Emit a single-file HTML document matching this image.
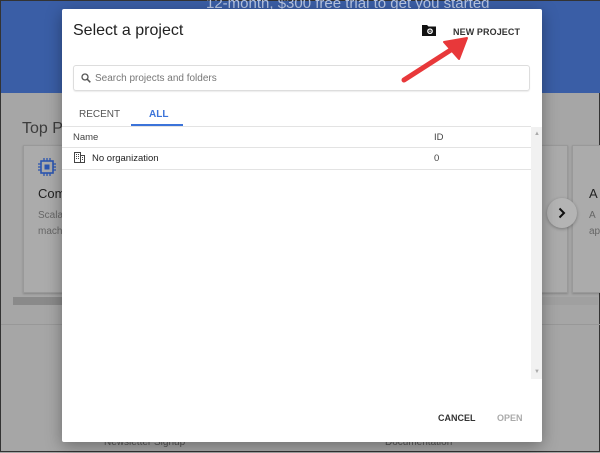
<!DOCTYPE html>
<html><head><meta charset="utf-8"><style>
*{margin:0;padding:0;box-sizing:border-box}
body{width:600px;height:452px;overflow:hidden;position:relative;font-family:"Liberation Sans",Arial,sans-serif;background:#a6a6a6;border:1px solid #333}
.blue{position:absolute;left:0;top:0;width:600px;height:92px;background:#3a5ea6}
.blue .t{position:absolute;left:205px;top:-6px;color:#b9c7e3;font-size:15px}
.top{position:absolute;left:21px;top:119px;font-size:16px;color:#3c3c3c}
.card{position:absolute;top:144px;height:148px;background:#ababab;border:1px solid #999;box-shadow:0 1px 2px rgba(0,0,0,.2)}
.sb{position:absolute;left:12px;top:296px;width:585px;height:8px;background:#a0a0a0}
.sb i{position:absolute;left:0;top:0;width:60px;height:8px;background:#8a8a8a}
.low{position:absolute;left:0;top:323px;width:600px;height:1px;background:#989898}
.circ{position:absolute;left:546px;top:197px;width:30px;height:30px;border-radius:50%;background:#b4b4b4;box-shadow:0 1px 3px rgba(0,0,0,.3)}
.dlg{position:absolute;left:61px;top:8px;width:480px;height:433px;background:#fff;box-shadow:0 4px 16px rgba(0,0,0,.35);border-radius:2px}
.h{position:absolute;left:11px;top:13px;font-size:16px;color:#222}
.np{position:absolute;left:391px;top:18px;font-size:9px;font-weight:bold;color:#333;letter-spacing:.1px}
.fold{position:absolute;left:360px;top:15px}
.search{position:absolute;left:11px;top:56px;width:457px;height:26px;border:1px solid #ddd;border-radius:3px;box-shadow:0 1px 1px rgba(0,0,0,.08)}
.search span{position:absolute;left:21px;top:7px;font-size:10px;color:#777}
.search svg{position:absolute;left:7px;top:7px}
.tab{position:absolute;top:100px;font-size:10px;color:#555}
.ul{position:absolute;left:69px;top:115px;width:52px;height:2px;background:#3b73d9}
.line{position:absolute;left:0;width:469px;height:1px;background:#e3e3e3}
.cell{position:absolute;font-size:9.5px;color:#444}
.vsb{position:absolute;left:469px;top:118px;width:11px;height:252px;background:#f1f1f1}
.btn{position:absolute;top:404px;font-size:9px;font-weight:bold}
.arrow{position:absolute;left:0;top:0}
</style></head><body>
<div class="blue"><div class="t">12-month, $300 free trial to get you started</div></div>
<div class="top">Top Pro</div>
<div class="card" style="left:22px;width:150px">
 <svg style="position:absolute;left:14px;top:12px" width="18" height="18" viewBox="0 0 18 18"><rect x="3" y="3" width="12" height="12" fill="none" stroke="#2b55b0" stroke-width="1.6"/><rect x="6.5" y="6.5" width="5" height="5" fill="#2b55b0"/><g stroke="#2b55b0" stroke-width="1.3"><path d="M6 0v3M9 0v3M12 0v3M6 15v3M9 15v3M12 15v3M0 6h3M0 9h3M0 12h3M15 6h3M15 9h3M15 12h3"/></g></svg>
 <div style="position:absolute;left:14px;top:40px;font-size:13px;color:#222">Comp</div>
 <div style="position:absolute;left:14px;top:62px;font-size:10px;color:#666;line-height:16px">Scalal<br>machi</div>
</div>
<div class="card" style="left:571px;width:30px">
 <div style="position:absolute;left:16px;top:40px;font-size:13px;color:#222">A</div>
 <div style="position:absolute;left:16px;top:62px;font-size:10px;color:#666;line-height:16px">A<br>ap</div>
</div>
<div class="card" style="left:539px;width:28px"></div>
<div class="sb"><i></i></div>
<div class="low"></div>
<div class="circ"><svg style="position:absolute;left:11px;top:9px" width="8" height="12" viewBox="0 0 8 12"><path d="M1.5 1.5L6 6l-4.5 4.5" fill="none" stroke="#111" stroke-width="2"/></svg></div>
<div style="position:absolute;left:103px;top:436px;font-size:10px;color:#555">Newsletter Signup</div>
<div style="position:absolute;left:384px;top:436px;font-size:10px;color:#555">Documentation</div>

<div class="dlg">
 <div class="h">Select a project</div>
 <svg class="fold" width="14" height="12" viewBox="0 0 14 12"><path d="M0 1h5l1.5 1.5H14V12H0z" fill="#111"/><circle cx="8" cy="7.2" r="2.2" fill="none" stroke="#fff" stroke-width="1.3"/><circle cx="8" cy="7.2" r=".7" fill="#fff"/></svg>
 <div class="np">NEW PROJECT</div>
 <div class="search"><svg width="10" height="10" viewBox="0 0 10 10"><circle cx="4" cy="4" r="3" fill="none" stroke="#555" stroke-width="1.3"/><path d="M6.2 6.2L9.3 9.3" stroke="#555" stroke-width="1.5"/></svg><span>Search projects and folders</span></div>
 <div class="tab" style="left:17px">RECENT</div>
 <div class="tab" style="left:87px;color:#3b73d9;font-weight:bold">ALL</div>
 <div class="ul"></div>
 <div class="line" style="top:117px"></div>
 <div class="cell" style="left:11px;top:123px">Name</div>
 <div class="cell" style="left:372px;top:123px">ID</div>
 <div class="line" style="top:138px"></div>
 <svg style="position:absolute;left:12px;top:143px" width="11" height="11" viewBox="0 0 11 11"><path d="M0.5 0.5h6v10h-6zM6.5 3.5h4v7h-4z" fill="none" stroke="#444"/><path d="M2 2h1v1H2zM4 2h1v1H4zM2 4h1v1H2zM4 4h1v1H4zM2 6h1v1H2zM4 6h1v1H4zM8 5h1v1H8zM8 7h1v1H8z" fill="#444"/></svg>
 <div class="cell" style="left:30px;top:144px;color:#222">No organization</div>
 <div class="cell" style="left:372px;top:144px">0</div>
 <div class="line" style="top:160px"></div>
 <div class="vsb"><div style="position:absolute;left:3px;top:4px;font-size:6px;color:#aaa">▲</div><div style="position:absolute;left:3px;top:242px;font-size:6px;color:#aaa">▼</div></div>
 <div class="btn" style="left:376px;color:#333">CANCEL</div>
 <div class="btn" style="left:435px;color:#aaa">OPEN</div>
</div>
<svg class="arrow" width="600" height="452"><path d="M403 79L456 45" stroke="#e8383a" stroke-width="5" stroke-linecap="round"/><path d="M466 37L443 41L458 58Z" fill="#e8383a" stroke="#e8383a" stroke-width="2" stroke-linejoin="round"/></svg>
</body></html>
